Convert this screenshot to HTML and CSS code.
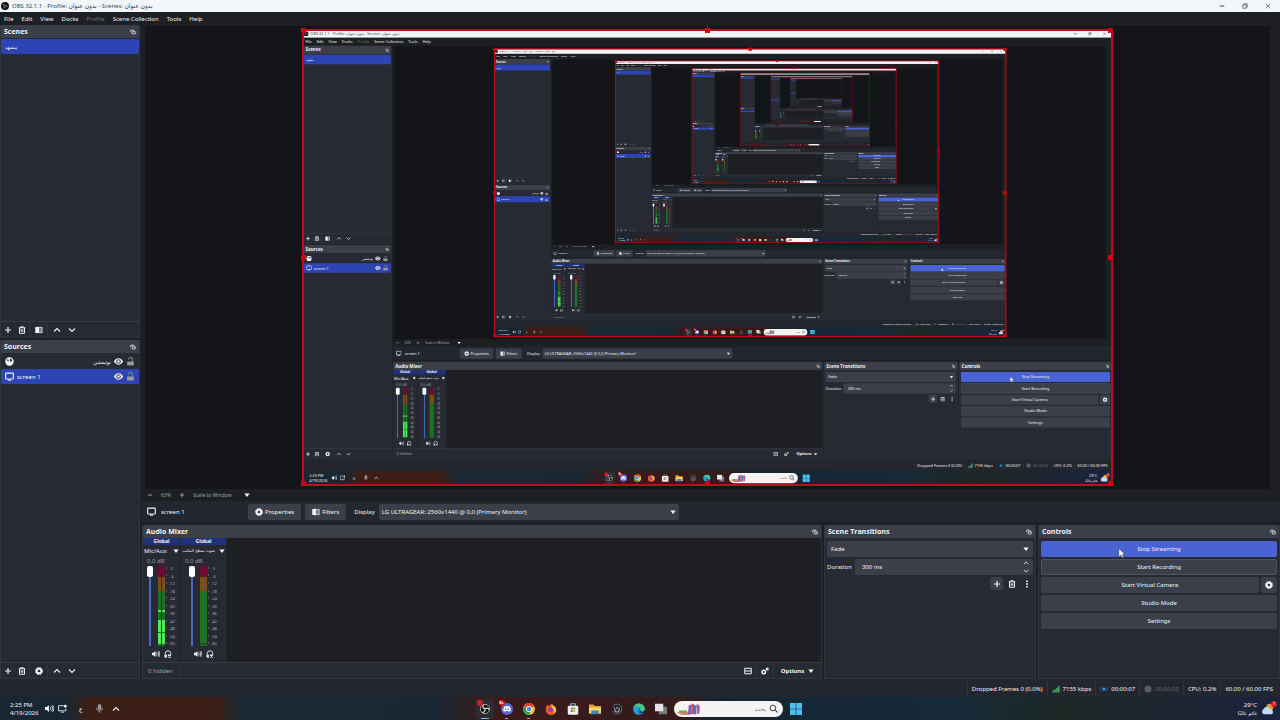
FILE: index.html
```html
<!DOCTYPE html>
<html lang="en">
<head>
    <meta charset="UTF-8">
    <meta name="viewport" content="width=device-width, initial-scale=1.0">
    <title>OBS 32.1.1</title>
    <link rel="stylesheet" href="styles.css">
</head>
<body>
    <svg class="sprite" aria-hidden="true">
        <symbol id="i-obs" viewBox="0 0 16 16"><circle cx="8" cy="8" r="7.5" fill="#111"/><circle cx="8" cy="8" r="6.3" fill="none" stroke="#ddd" stroke-width="1"/><path d="M8 8C5 7 4.500 4.500 6 2.500M8 8c2.500-2 5-1 5.500 1.500M8 8c.5 3-1.500 5-4 4.500" fill="none" stroke="#ddd" stroke-width="1.600"/></symbol>
        <symbol id="i-logo" viewBox="0 0 16 16"><circle cx="8" cy="8" r="8" fill="#111"/><path d="M8 8C5 7 4.500 5 6 3M8 8c2.500-2 4-1 4.500 1.500M8 8c.5 3-1 4-3.500 4" fill="none" stroke="#aaa" stroke-width="1.500"/></symbol>
        <symbol id="i-float" viewBox="0 0 16 16"><path d="M2 9V3h8v2M6 7h8v6H6z" fill="none" stroke="currentColor" stroke-width="2"/></symbol>
        <symbol id="i-plus" viewBox="0 0 16 16"><path d="M8 2v12M2 8h12" stroke="currentColor" stroke-width="2.400"/></symbol>
        <symbol id="i-minus" viewBox="0 0 16 16"><path d="M2 8h12" stroke="currentColor" stroke-width="2.400"/></symbol>
        <symbol id="i-trash" viewBox="0 0 16 16"><path d="M1.500 3.500h13M5.500 3V1.500h5V3M3 4v10.500h10V4M6.500 6.500v5M9.500 6.500v5" fill="none" stroke="currentColor" stroke-width="2"/></symbol>
        <symbol id="i-filter" viewBox="0 0 16 16"><path d="M1 2h14v12H1z" fill="#777b85"/><path d="M1 2h7v12H1z" fill="currentColor"/><path d="M1.700 2.700h12.600v10.600H1.700z" fill="none" stroke="currentColor" stroke-width="1.200"/></symbol>
        <symbol id="i-up" viewBox="0 0 16 16"><path d="M2 11l6-6 6 6" fill="none" stroke="currentColor" stroke-width="2.200"/></symbol>
        <symbol id="i-down" viewBox="0 0 16 16"><path d="M2 5l6 6 6-6" fill="none" stroke="currentColor" stroke-width="2.200"/></symbol>
        <symbol id="i-caret" viewBox="0 0 16 16"><path d="M1 4h14l-7 9z" fill="currentColor"/></symbol>
        <symbol id="i-gear" viewBox="0 0 16 16"><circle cx="8" cy="8" r="4.700" fill="none" stroke="currentColor" stroke-width="4"/><circle cx="8" cy="8" r="6.900" fill="none" stroke="currentColor" stroke-width="2" stroke-dasharray="3.400 2"/></symbol>
        <symbol id="i-globe" viewBox="0 0 16 16"><circle cx="8" cy="8" r="7.500" fill="#fff"/><path d="M3 4l3 .5 1 2-2 1.500zM9 3l4 1.500-1 3-2 2-1-3z" fill="#272a33"/></symbol>
        <symbol id="i-screen" viewBox="0 0 16 16"><rect x="1.200" y="2" width="13.600" height="10.500" rx="1.500" fill="none" stroke="currentColor" stroke-width="2"/><path d="M5 14.500h6" stroke="currentColor" stroke-width="2"/></symbol>
        <symbol id="i-eye" viewBox="0 0 16 16"><path d="M0 8c4-7.500 12-7.500 16 0-4 7.500-12 7.500-16 0z" fill="#fff"/><circle cx="8" cy="8" r="3.300" fill="none" stroke="#2b3350" stroke-width="1.800"/></symbol>
        <symbol id="i-lock" viewBox="0 0 16 16"><path d="M2 8h12v7H2z" fill="#9a9a9e"/><path d="M5 5V4a3 3 0 0 1 6.500 0v4" fill="none" stroke="#85868c" stroke-width="1.800"/></symbol>
        <symbol id="i-speaker" viewBox="0 0 16 16"><path d="M0 5.500h3L7 2v12L3 10.500H0z" fill="currentColor"/><path d="M9 5c1.500 2 1.500 4 0 6M11.500 3.500c2.500 3 2.500 6 0 9M13.500 2c3 4 3 8 0 12" fill="none" stroke="currentColor" stroke-width="1.500"/></symbol>
        <symbol id="i-phones" viewBox="0 0 16 16"><path d="M2.500 14V7a5.500 5.500 0 0 1 11 0v2M2 10h3v4.500H2z" fill="none" stroke="currentColor" stroke-width="1.800"/><path d="M8 9l6 6M14 9l-6 6" stroke="currentColor" stroke-width="2.200"/></symbol>
        <symbol id="i-layout" viewBox="0 0 16 16"><path d="M1.500 2.500h13v11h-13zM2 8h12" fill="none" stroke="currentColor" stroke-width="2"/></symbol>
        <symbol id="i-gears" viewBox="0 0 16 16"><circle cx="5.500" cy="10" r="3.500" fill="none" stroke="currentColor" stroke-width="3"/><circle cx="12.500" cy="4" r="1.800" fill="none" stroke="currentColor" stroke-width="2.400"/></symbol>
        <symbol id="i-dots" viewBox="0 0 16 16"><circle cx="8" cy="2.500" r="1.900" fill="currentColor"/><circle cx="8" cy="8" r="1.900" fill="currentColor"/><circle cx="8" cy="13.500" r="1.900" fill="currentColor"/></symbol>
        <symbol id="i-signal" viewBox="0 0 16 16"><path d="M1 11h3v4H1zM4.700 8.500h3V15h-3zM8.400 5.500h3V15h-3zM12 2h3v13h-3z" fill="#3fae62"/></symbol>
        <symbol id="i-live" viewBox="0 0 16 16"><circle cx="8" cy="8" r="3" fill="#3d9be8"/><path d="M3 3.500c-2 3-2 6 0 9M13 3.500c2 3 2 6 0 9" fill="none" stroke="#2c5f9c" stroke-width="2"/></symbol>
        <symbol id="i-record" viewBox="0 0 16 16"><circle cx="8" cy="8" r="7" fill="#5b5e66"/></symbol>
        <symbol id="i-restore" viewBox="0 0 16 16"><path d="M2 5h9v9H2zM5 5V2h9v9h-3" fill="none" stroke="currentColor" stroke-width="1.600"/></symbol>
        <symbol id="i-close" viewBox="0 0 16 16"><path d="M2 2l12 12M14 2L2 14" stroke="currentColor" stroke-width="1.600"/></symbol>
        <symbol id="i-net" viewBox="0 0 16 16"><path d="M10 3H1v9h13V8M5 14.500h6" fill="none" stroke="currentColor" stroke-width="1.500"/><circle cx="13" cy="4" r="2.500" fill="currentColor"/></symbol>
        <symbol id="i-mic" viewBox="0 0 16 16"><rect x="5.500" y="1" width="5" height="9" rx="2.500" fill="#8a9aa0" stroke="#b8c8cc"/><path d="M2.500 7c0 7 11 7 11 0M8 12.500V15.500" fill="none" stroke="#a8b4b8" stroke-width="1.400"/></symbol>
        <symbol id="i-search" viewBox="0 0 16 16"><circle cx="7" cy="7" r="5" fill="none" stroke="#333" stroke-width="1.700"/><path d="M11 11l4 4" stroke="#333" stroke-width="2"/></symbol>
        <symbol id="i-discord" viewBox="0 0 16 16"><circle cx="8" cy="8" r="8" fill="#5865d8"/><path d="M4.500 4.800c2-1 5-1 7 0 1.300 2 1.700 4 1.500 5.700l-2.600 1.300-.8-1.300H6.400l-.8 1.300L3 10.500c-.2-1.700.2-3.700 1.500-5.700z" fill="#fff"/><circle cx="6.200" cy="8.200" r="1.100" fill="#5865d8"/><circle cx="9.800" cy="8.200" r="1.100" fill="#5865d8"/></symbol>
        <symbol id="i-chrome" viewBox="0 0 16 16"><circle cx="8" cy="8" r="8" fill="#f2c12e"/><path d="M8 8L1.100 4a8 8 0 0 1 13.800 0z" fill="#dc4437"/><path d="M8 8L1.100 4A8 8 0 0 0 8 16l3-6z" fill="#2f9e54"/><circle cx="8" cy="8" r="4" fill="#fff"/><circle cx="8" cy="8" r="3" fill="#4285f4"/></symbol>
        <symbol id="i-firefox" viewBox="0 0 16 16"><path d="M1 6l2-4 2 2 4-3c0 2 6 3 6 8a7 7 0 0 1-14 0z" fill="#f0552c"/><path d="M9 1c0 2 6 3 6 8a7 7 0 0 1-5 6c3-3 2-7-1-8z" fill="#fbbf35"/><circle cx="7.500" cy="9" r="3" fill="#8044c0"/></symbol>
        <symbol id="i-store" viewBox="0 0 16 16"><path d="M5 4V1h6v3" fill="none" stroke="#6bb8e0" stroke-width="1.500"/><rect x="1" y="3.500" width="14" height="12" rx="1.500" fill="#f2f2f2"/><path d="M5 6h2.700v2.700H5z" fill="#e0583c"/><path d="M8.300 6H11v2.700H8.300z" fill="#69a840"/><path d="M5 9.300h2.700V12H5z" fill="#3b8bd0"/><path d="M8.300 9.300H11V12H8.300z" fill="#edb42c"/></symbol>
        <symbol id="i-folder" viewBox="0 0 16 16"><path d="M0 2h6l2 2h8v10H0z" fill="#e2a52e"/><path d="M0 6h16v8H0z" fill="#f8d568"/><path d="M3 10h10v5H3z" fill="#3f83b8"/></symbol>
        <symbol id="i-ring" viewBox="0 0 16 16"><circle cx="8" cy="8" r="7.500" fill="#17181c"/><path d="M2 6a6.500 6.500 0 0 1 6-4.500" stroke="#c060b0" fill="none"/><path d="M8 1.500A6.500 6.500 0 0 1 14.500 8" stroke="#58b070" fill="none"/><path d="M14.500 8A6.500 6.500 0 0 1 2 10.500" stroke="#8890a0" fill="none"/><path d="M5 6v3a3 3 0 0 0 6 0V6M8 4.500v4" stroke="#b8b0c8" stroke-width="1.400" fill="none"/></symbol>
        <symbol id="i-edge" viewBox="0 0 16 16"><circle cx="8" cy="8" r="7.800" fill="#1c78c8"/><path d="M.4 7A7.800 7.800 0 0 1 15.800 8c0 4-6 4-6 1.500C11 6 4 3 .4 7z" fill="#48c878"/><path d="M.5 7C4 3 8 5 8 7c-3 2-2 6 1 8.500C3 16 0 11 .5 7z" fill="#2a9fd8"/><path d="M9.800 9.500c0 2.500 3.500 3 5.700 1.200-1 2-3 3-5 2.300-2-.8-2-3-.7-3.500z" fill="#16283a"/></symbol>
        <symbol id="i-tasks" viewBox="0 0 16 16"><path d="M5 5h11v10H5z" fill="#77797c"/><path d="M0 1h11v10H0z" fill="#e4e4e4"/></symbol>
        <symbol id="i-windows" viewBox="0 0 16 16"><path d="M0 0h7.600v7.600H0zM8.400 0H16v7.600H8.400zM0 8.400h7.600V16H0zM8.400 8.400H16V16H8.400z" fill="#4cc0f0"/></symbol>
        <symbol id="i-books" viewBox="0 0 32 16"><path d="M0 12h14v2H0z" fill="#b89048"/><path d="M2 10h11v2H2z" fill="#7aa05c"/><path d="M4 14h12v1.500H4z" fill="#b05050"/><path d="M15 3l4-1v13h-5z" fill="#8858b0"/><path d="M19 1h3v14h-3z" fill="#c85060"/><path d="M22 3h3v12h-3z" fill="#4878b8"/><path d="M25 2h3l2 3-1 9-3 1z" fill="#a860a0"/></symbol>
        <symbol id="i-weather" viewBox="0 0 16 16"><circle cx="10" cy="6" r="4" fill="#e89a3c"/><path d="M3 14a3.500 3.500 0 0 1 0-6c1.500-3 6-3 7 0 4-.5 5 5 2 6z" fill="#c0dcf8"/></symbol>
        <symbol id="i-cursor" viewBox="0 0 16 16"><path d="M3 1v13l3.200-3 2 4.500 2.300-1-2-4.500h4.200z" fill="#fff" stroke="#333" stroke-width=".7"/></symbol>
        <symbol id="meter-live" viewBox="0 0 9 80">
            <path d="M0 0h3v11H0zM4 0h3v11H4z" fill="#6e0c30"/><path d="M0 11h3v14H0zM4 11h3v14H4z" fill="#79501a"/><path d="M0 25h3v55H0zM4 25h3v55H4z" fill="#1f6f25"/>
            <path d="M0 44h3v2H0zM4 44h3v2H4zM0 54h3v12H0zM4 54h3v12H4zM0 67h3v11H0zM4 67h3v11H4z" fill="#50ea5a"/>
            <path d="M8 2h1M8 9h1M8 17h1M8 25h1M8 32h1M8 40h1M8 47h1M8 55h1M8 62h1M8 70h1M8 77h1" stroke="#888"/>
        </symbol>
        <symbol id="meter-idle" viewBox="0 0 9 80">
            <path d="M0 0h7v11H0z" fill="#6e0c30"/><path d="M0 11h7v14H0z" fill="#79501a"/><path d="M0 25h7v55H0z" fill="#1f6f25"/><path d="M0 78h7" stroke="#123f18"/>
            <path d="M8 2h1M8 9h1M8 17h1M8 25h1M8 32h1M8 40h1M8 47h1M8 55h1M8 62h1M8 70h1M8 77h1" stroke="#888"/>
        </symbol>
    </svg>

    <div class="desktop">
        <header class="titlebar">
            <svg class="icon"><use href="#i-logo"/></svg>
            <span class="titlebar-text">OBS 32.1.1 - Profile: بدون عنوان - Scenes: <bdi>بدون عنوان</bdi></span>
            <div class="window-buttons">
                <button aria-label="Minimize"><svg class="icon-xs"><use href="#i-minus"/></svg></button>
                <button aria-label="Restore"><svg class="icon-xs"><use href="#i-restore"/></svg></button>
                <button aria-label="Close"><svg class="icon-xs"><use href="#i-close"/></svg></button>
            </div>
        </header>
        <nav class="menubar">
            <button>File</button>
            <button>Edit</button>
            <button>View</button>
            <button>Docks</button>
            <button disabled>Profile</button>
            <button>Scene Collection</button>
            <button>Tools</button>
            <button>Help</button>
        </nav>

        <main class="workspace">
            <aside class="sidebar">
                <section class="dock">
                    <h2 class="dock-title">Scenes <svg class="icon-xs"><use href="#i-float"/></svg></h2>
                    <ul class="list">
                        <li class="row selected"><span class="arabic">مشهد</span></li>
                    </ul>
                    <div class="toolbar">
                        <button aria-label="Add scene"><svg class="icon"><use href="#i-plus"/></svg></button>
                        <button aria-label="Remove scene"><svg class="icon"><use href="#i-trash"/></svg></button>
                        <button class="split" aria-label="Scene filters"><svg class="icon"><use href="#i-filter"/></svg></button>
                        <button class="split" aria-label="Move scene up"><svg class="icon"><use href="#i-up"/></svg></button>
                        <button aria-label="Move scene down"><svg class="icon"><use href="#i-down"/></svg></button>
                    </div>
                </section>
                <section class="dock">
                    <h2 class="dock-title">Sources <svg class="icon-xs"><use href="#i-float"/></svg></h2>
                    <ul class="list">
                        <li class="row">
                            <svg class="icon-lg"><use href="#i-globe"/></svg>
                            <span class="row-name arabic" dir="rtl">نوتيفشن</span>
                            <svg class="icon-lg"><use href="#i-eye"/></svg>
                            <svg class="icon-lg"><use href="#i-lock"/></svg>
                        </li>
                        <li class="row selected">
                            <svg class="icon-lg"><use href="#i-screen"/></svg>
                            <span class="row-name">screen 1</span>
                            <svg class="icon-lg"><use href="#i-eye"/></svg>
                            <svg class="icon-lg"><use href="#i-lock"/></svg>
                        </li>
                    </ul>
                    <div class="toolbar">
                        <button aria-label="Add source"><svg class="icon"><use href="#i-plus"/></svg></button>
                        <button aria-label="Remove source"><svg class="icon"><use href="#i-trash"/></svg></button>
                        <button class="split" aria-label="Source properties"><svg class="icon"><use href="#i-gear"/></svg></button>
                        <button class="split" aria-label="Move source up"><svg class="icon"><use href="#i-up"/></svg></button>
                        <button aria-label="Move source down"><svg class="icon"><use href="#i-down"/></svg></button>
                    </div>
                </section>
            </aside>

            <div class="content">
                <div class="preview">
                    <div class="capture">
                        <div class="capture-view" aria-hidden="true" inert></div>
                        <div class="handles"><i></i><i></i><i></i><i></i><i></i><i></i><i></i><i></i></div>
                    </div>
                </div>

                <div class="zoombar">
                    <button aria-label="Zoom out"><svg class="icon-xs"><use href="#i-minus"/></svg></button>
                    <span class="zoom-value">63%</span>
                    <button aria-label="Zoom in"><svg class="icon-xs"><use href="#i-plus"/></svg></button>
                    <span class="combo">
                        <select aria-label="Preview scaling"><option>Scale to Window</option></select>
                        <svg class="icon-xs"><use href="#i-caret"/></svg>
                    </span>
                </div>

                <div class="context">
                    <svg class="icon-lg"><use href="#i-screen"/></svg>
                    <span class="context-name">screen 1</span>
                    <button class="button"><svg class="icon"><use href="#i-gear"/></svg>Properties</button>
                    <button class="button"><svg class="icon"><use href="#i-filter"/></svg>Filters</button>
                    <label class="display-label">Display
                        <span class="combo">
                            <select><option>LG ULTRAGEAR: 2560x1440 @ 0,0 (Primary Monitor)</option></select>
                            <svg class="icon-xs"><use href="#i-caret"/></svg>
                        </span>
                    </label>
                </div>

                <div class="docks">
                    <section class="dock">
                        <h2 class="dock-title">Audio Mixer <svg class="icon-xs"><use href="#i-float"/></svg></h2>
                        <div class="mixer">
                            <div class="strip">
                                <div class="strip-tag">Global</div>
                                <button class="strip-name">Mic/Aux <svg class="icon-xs"><use href="#i-caret"/></svg></button>
                                <div class="strip-db">0.0 dB</div>
                                <div class="strip-levels">
                                    <input type="range" min="-60" max="0" value="0" aria-label="Mic/Aux volume">
                                    <svg class="meter"><use href="#meter-live"/></svg>
                                    <div class="scale"><span>0</span><span>-6</span><span>-12</span><span>-18</span><span>-24</span><span>-30</span><span>-36</span><span>-42</span><span>-48</span><span>-54</span><span>-60</span></div>
                                </div>
                                <div class="strip-buttons">
                                    <button aria-label="Mute"><svg class="icon"><use href="#i-speaker"/></svg></button>
                                    <button aria-label="Monitor"><svg class="icon"><use href="#i-phones"/></svg></button>
                                </div>
                            </div>
                            <div class="strip wide">
                                <div class="strip-tag">Global</div>
                                <button class="strip-name"><span class="arabic" dir="rtl">صوت سطح المكتب</span> <svg class="icon-xs"><use href="#i-caret"/></svg></button>
                                <div class="strip-db">0.0 dB</div>
                                <div class="strip-levels">
                                    <input type="range" min="-60" max="0" value="0" aria-label="Desktop volume">
                                    <svg class="meter"><use href="#meter-idle"/></svg>
                                    <div class="scale"><span>0</span><span>-6</span><span>-12</span><span>-18</span><span>-24</span><span>-30</span><span>-36</span><span>-42</span><span>-48</span><span>-54</span><span>-60</span></div>
                                </div>
                                <div class="strip-buttons">
                                    <button aria-label="Mute"><svg class="icon"><use href="#i-speaker"/></svg></button>
                                    <button aria-label="Monitor"><svg class="icon"><use href="#i-phones"/></svg></button>
                                </div>
                            </div>
                        </div>
                        <div class="toolbar mixer-footer">
                            <span class="hidden-count">0 hidden</span>
                            <button aria-label="Toggle layout"><svg class="icon"><use href="#i-layout"/></svg></button>
                            <button class="split" aria-label="Advanced audio"><svg class="icon"><use href="#i-gears"/></svg></button>
                            <button class="options split">Options <svg class="icon-xs"><use href="#i-caret"/></svg></button>
                        </div>
                    </section>

                    <section class="dock">
                        <h2 class="dock-title">Scene Transitions <svg class="icon-xs"><use href="#i-float"/></svg></h2>
                        <div class="panel">
                            <span class="combo">
                                <select aria-label="Transition"><option>Fade</option></select>
                                <svg class="icon-xs"><use href="#i-caret"/></svg>
                            </span>
                            <label class="duration">Duration
                                <span class="spin">
                                    <input type="text" value="300 ms">
                                    <span class="spin-arrows"><svg class="icon-xs"><use href="#i-up"/></svg><svg class="icon-xs"><use href="#i-down"/></svg></span>
                                </span>
                            </label>
                            <div class="transition-buttons">
                                <button class="filled" aria-label="Add transition"><svg class="icon"><use href="#i-plus"/></svg></button>
                                <button aria-label="Remove transition"><svg class="icon"><use href="#i-trash"/></svg></button>
                                <button aria-label="More"><svg class="icon"><use href="#i-dots"/></svg></button>
                            </div>
                        </div>
                    </section>

                    <section class="dock">
                        <h2 class="dock-title">Controls <svg class="icon-xs"><use href="#i-float"/></svg></h2>
                        <div class="panel controls">
                            <button class="button active">Stop Streaming<svg class="cursor"><use href="#i-cursor"/></svg></button>
                            <button class="button outlined">Start Recording</button>
                            <div class="button-pair">
                                <button class="button">Start Virtual Camera</button>
                                <button class="button" aria-label="Virtual camera settings"><svg class="icon"><use href="#i-gear"/></svg></button>
                            </div>
                            <button class="button">Studio Mode</button>
                            <button class="button">Settings</button>
                        </div>
                    </section>
                </div>
            </div>
        </main>

        <footer class="statusbar">
            <span>Dropped Frames 0 (0.0%)</span>
            <span><svg class="icon"><use href="#i-signal"/></svg>7155 kbps</span>
            <span><svg class="icon"><use href="#i-live"/></svg>00:00:07</span>
            <span class="dim"><svg class="icon"><use href="#i-record"/></svg>00:00:00</span>
            <span>CPU: 0.2%</span>
            <span>60.00 / 60.00 FPS</span>
        </footer>

        <div class="taskbar">
            <div class="tray">
                <div class="clock"><span>2:25 PM</span><span>4/19/2026</span></div>
                <svg class="icon-lg"><use href="#i-speaker"/></svg>
                <svg class="icon-lg"><use href="#i-net"/></svg>
                <span class="lang">ع</span>
                <svg class="icon-lg"><use href="#i-mic"/></svg>
                <svg class="icon"><use href="#i-up"/></svg>
            </div>
            <div class="apps">
                <button class="app current" aria-label="OBS"><svg><use href="#i-obs"/></svg><b class="badge"></b></button>
                <button class="app running" aria-label="Discord"><svg><use href="#i-discord"/></svg><b class="badge">9+</b></button>
                <button class="app running" aria-label="Chrome"><svg><use href="#i-chrome"/></svg></button>
                <button class="app" aria-label="Firefox"><svg><use href="#i-firefox"/></svg></button>
                <button class="app" aria-label="Store"><svg><use href="#i-store"/></svg></button>
                <button class="app" aria-label="Explorer"><svg><use href="#i-folder"/></svg></button>
                <button class="app" aria-label="Recorder"><svg><use href="#i-ring"/></svg></button>
                <button class="app" aria-label="Edge"><svg><use href="#i-edge"/></svg></button>
                <button class="app" aria-label="Task view"><svg><use href="#i-tasks"/></svg></button>
                <label class="search">
                    <svg class="books"><use href="#i-books"/></svg>
                    <input type="text" dir="rtl" placeholder="بحث" aria-label="Search">
                    <svg class="icon-lg"><use href="#i-search"/></svg>
                </label>
                <button class="app" aria-label="Start"><svg><use href="#i-windows"/></svg></button>
            </div>
            <div class="weather">
                <div class="weather-text"><span>29°C</span><span class="arabic" dir="rtl">غائم غالبًا</span></div>
                <span class="weather-icon"><svg><use href="#i-weather"/></svg><b class="badge">!</b></span>
            </div>
        </div>
    </div>

    <script src="preview.js"></script>
</body>
</html>
```

FILE: styles.css
```css
* {
    box-sizing: border-box;
}

body {
    margin: 0;
    overflow: hidden;
    background: #1d1f26;
    color: #f2f3f5;
    font-family: "Noto Sans", "DejaVu Sans", sans-serif;
    font-size: 6px;
    line-height: 10px;
}

button,
select,
input {
    margin: 0;
    padding: 0;
    border: 0;
    background: none;
    color: inherit;
    font: inherit;
}

button {
    display: flex;
    align-items: center;
    justify-content: center;
    white-space: nowrap;
}

select {
    appearance: none;
}

svg {
    display: block;
    flex: none;
}

.sprite {
    position: absolute;
    width: 0;
    height: 0;
}

.icon-xs {
    width: 6px;
    height: 6px;
}

.icon {
    width: 8px;
    height: 8px;
}

.icon-lg {
    width: 9px;
    height: 9px;
}

.arabic {
    font-family: "DejaVu Sans", sans-serif;
    font-size: 5px;
}

.desktop {
    display: flex;
    flex-direction: column;
    width: 100vw;
    height: 100vh;
    background: #1d1f23;
}

/* Title bar and menu */
.titlebar {
    display: flex;
    align-items: center;
    gap: 3px;
    height: 12px;
    padding: 0 9px 0 1px;
    background: #f2f6fb;
    color: #333;
}

.titlebar-text {
    flex: 1;
    font-family: "Open Sans", "DejaVu Sans", sans-serif;
}

.window-buttons {
    display: flex;
    gap: 17px;
}

.menubar {
    display: flex;
    gap: 8px;
    height: 13px;
    padding: 0 4px;
}

.menubar button:disabled {
    color: #6a6c72;
}

/* Docks */
.workspace {
    display: flex;
    flex: 1;
    gap: 2px;
    min-height: 0;
}

.sidebar {
    display: grid;
    grid-template-rows: 313fr 339fr;
    gap: 2px;
    width: 140px;
}

.content {
    display: flex;
    flex: 1;
    flex-direction: column;
    min-width: 0;
}

.dock {
    display: flex;
    flex-direction: column;
    min-width: 0;
    border: 1px solid #32353f;
    border-top: 0;
    background: #272a33;
}

.dock-title {
    display: flex;
    align-items: center;
    justify-content: space-between;
    height: 13px;
    margin: 0;
    padding: 0 3px;
    border-radius: 2px 2px 0 0;
    background: #3c3e4a;
    font-family: "Open Sans", sans-serif;
    font-size: 7px;
    font-weight: 700;
}

.list {
    flex: 1;
    margin: 0;
    padding: 1px 0;
    list-style: none;
}

.row {
    display: flex;
    align-items: center;
    gap: 3px;
    height: 15px;
    padding: 0 4px;
    border-radius: 2px;
}

.row.selected {
    background: #2d45b4;
}

.row-name {
    flex: 1;
}

.toolbar {
    display: flex;
    align-items: center;
    height: 16px;
    border-top: 1px solid #383b45;
}

.toolbar button {
    width: 14px;
    height: 15px;
}

.toolbar .split {
    width: 18px;
    border-left: 1px solid #32353f;
}

/* Preview */
.preview {
    display: flex;
    flex: 1;
    justify-content: center;
    min-height: 0;
    margin: 1px 10px 0 3px;
    padding: 4px;
    background: #141519;
}

.capture {
    position: relative;
    height: 100%;
    min-width: 0;
    aspect-ratio: 16 / 9;
}

/* the copies inside are full size until scaled, so they must not stretch the frame */
.capture-view {
    contain: strict;
    height: 100%;
}

.capture-view > .desktop {
    transform: scale(var(--capture-scale, 1));
    transform-origin: 0 0;
}

.handles {
    position: absolute;
    inset: -1px;
    border: 2px solid #c20a18;
}

.handles i {
    position: absolute;
    width: 5px;
    height: 5px;
    margin: -3px;
    background: #d40012;
}

.handles i:nth-child(1) { top: 0; left: 0; }
.handles i:nth-child(2) { top: 0; left: 50%; }
.handles i:nth-child(3) { top: 0; left: 100%; }
.handles i:nth-child(4) { top: 50%; left: 0; }
.handles i:nth-child(5) { top: 50%; left: 100%; }
.handles i:nth-child(6) { top: 100%; left: 0; }
.handles i:nth-child(7) { top: 100%; left: 50%; }
.handles i:nth-child(8) { top: 100%; left: 100%; }

.handles i:nth-child(2)::before {
    content: "";
    position: absolute;
    left: 2px;
    bottom: 5px;
    width: 1px;
    height: 3px;
    background: #d40012;
}

.combo {
    display: grid;
    align-items: center;
}

.combo > * {
    grid-area: 1 / 1;
}

.combo svg {
    justify-self: end;
    pointer-events: none;
}

.zoombar {
    display: flex;
    align-items: center;
    gap: 8px;
    height: 11px;
    padding-left: 5px;
    color: #a0a2a8;
    font-size: 5px;
}

.zoombar .combo {
    width: 57px;
}

.zoombar .combo svg {
    color: #fff;
}

.context {
    display: flex;
    align-items: center;
    height: 21px;
    margin: 1px 0 3px;
    padding-left: 5px;
    background: #23262e;
}

.context-name {
    width: 92px;
    padding-left: 5px;
}

.context .button {
    margin-right: 4px;
    padding: 0 7px;
}

.display-label {
    display: flex;
    align-items: center;
    gap: 4px;
    padding-left: 4px;
}

.display-label .combo {
    width: 300px;
    height: 16px;
    padding: 0 3px;
    border-radius: 2px;
    background: #3c3f4a;
}

.button {
    gap: 2px;
    height: 16px;
    border-radius: 2px;
    background: #3c3f4a;
}

.docks {
    display: grid;
    grid-template-columns: 1fr 212px 242px;
    gap: 2px;
    height: 154px;
}

/* Audio mixer */
.mixer {
    display: flex;
    flex: 1;
    background: #1d1f23;
}

.strip {
    width: 38px;
    border-right: 1px solid #20232b;
    background: #272a33;
}

.strip.wide {
    width: 46px;
}

.strip-tag {
    height: 7px;
    background: #20307c;
    font-size: 5px;
    font-weight: 700;
    line-height: 7px;
    text-align: center;
}

.strip-name {
    justify-content: space-between;
    width: 100%;
    height: 11px;
    padding: 0 1px;
}

.strip-name .arabic {
    font-size: 4px;
}

.strip-db {
    height: 10px;
    padding-left: 4px;
    color: #96989f;
}

.strip-levels {
    display: flex;
    gap: 5px;
    height: 80px;
    padding-left: 4px;
}

.wide .strip-levels {
    padding-left: 8px;
}

.strip-levels input {
    appearance: none;
    width: 6px;
    height: 80px;
    background: linear-gradient(90deg, transparent 2px, #4568c0 2px, #4568c0 4px, transparent 4px);
    writing-mode: vertical-lr;
    direction: rtl;
}

.strip-levels input::-webkit-slider-thumb {
    appearance: none;
    width: 6px;
    height: 11px;
    border-radius: 2px;
    background: #fff;
}

.meter {
    width: 9px;
    height: 80px;
    margin-right: -3px;
}

.scale {
    display: flex;
    flex-direction: column;
    justify-content: space-between;
    height: 80px;
    color: #aaacb2;
    font-size: 4px;
    line-height: 5px;
    text-align: center;
}

.strip-buttons {
    display: flex;
    justify-content: center;
    gap: 4px;
    padding-top: 4px;
}

.mixer-footer .hidden-count {
    margin-right: auto;
    padding: 0 6px 0 5px;
    border-right: 1px solid #32353f;
    color: #a0a2a8;
}

.toolbar .options {
    gap: 4px;
    width: 48px;
    font-weight: 700;
}

/* Transitions and controls */
.panel {
    display: flex;
    flex-direction: column;
    gap: 2px;
    padding: 3px 2px;
}

.panel .combo,
.spin {
    height: 16px;
    padding: 0 4px;
    border-radius: 2px;
    background: #3c3f4a;
}

.duration {
    display: flex;
    align-items: center;
    gap: 3px;
}

.spin {
    display: flex;
    flex: 1;
    align-items: center;
    justify-content: space-between;
    min-width: 0;
}

.spin input {
    flex: 1;
    min-width: 0;
    padding-left: 3px;
}

.spin-arrows {
    display: grid;
    gap: 2px;
}

.transition-buttons {
    display: flex;
    justify-content: flex-end;
    gap: 2px;
}

.transition-buttons button {
    width: 13px;
    height: 13px;
}

.transition-buttons .filled {
    border-radius: 2px;
    background: #3c3f4a;
}

.controls .active {
    position: relative;
    background: #4a63d2;
}

.controls .outlined {
    border: 1px solid #50535f;
}

.cursor {
    position: absolute;
    top: 7px;
    left: 32%;
    width: 10px;
    height: 10px;
}

.button-pair {
    display: grid;
    grid-template-columns: 1fr 16px;
    gap: 2px;
}

.statusbar {
    display: flex;
    justify-content: flex-end;
    height: 18px;
    padding: 2px 3px 1px;
    background: #23262e;
}

.statusbar span {
    display: flex;
    align-items: center;
    gap: 3px;
    padding: 0 4px;
    border-left: 1px solid #32353f;
}

.statusbar .dim {
    color: #6a6c72;
}

/* Windows taskbar */
.taskbar {
    display: grid;
    grid-template-columns: 1fr auto 1fr;
    align-items: center;
    height: 23px;
    background: linear-gradient(90deg, #172733 0, #172733 5%, #3b1f17 7%, #3b1f17 17%, #182935 19%, #182733 34%, #3a1a1a 38%, #341b1c 53%, #152633 56%, #162936 75%, #1c2825 83%, #1b2535 94%, #1a2340 100%);
}

.tray {
    display: flex;
    align-items: center;
    gap: 4px;
    padding-left: 10px;
}

.clock,
.weather-text {
    display: grid;
    line-height: 8px;
}

.clock {
    width: 31px;
}

.lang {
    padding: 0 8px;
}

.tray > .icon {
    margin-left: 4px;
}

.apps {
    display: flex;
    align-items: center;
    gap: 4px;
}

.app {
    position: relative;
    width: 18px;
    height: 20px;
}

.app svg {
    width: 12px;
    height: 12px;
}

.app.current {
    border-radius: 2px;
    background: #2c2d33;
}

.app.running::after,
.app.current::after {
    content: "";
    position: absolute;
    bottom: 0;
    width: 3px;
    height: 1px;
    background: #a8a8a8;
}

.app.current::after {
    width: 8px;
    background: #60c0f0;
}

.badge {
    position: absolute;
    top: 1px;
    left: 1px;
    min-width: 6px;
    height: 6px;
    border-radius: 3px;
    background: #d81c24;
    color: #fff;
    font-size: 4px;
    line-height: 6px;
    text-align: center;
}

.search {
    display: flex;
    align-items: center;
    justify-content: space-between;
    width: 109px;
    height: 16px;
    padding: 0 5px 0 3px;
    border-radius: 8px;
    background: #f4f4f2;
}

.search input {
    width: 62px;
    color: #555;
}

.search input::placeholder {
    color: #777;
}

.books {
    width: 25px;
    height: 12px;
}

.weather {
    display: flex;
    align-items: center;
    justify-content: flex-end;
    gap: 4px;
    padding-right: 5px;
    text-align: right;
}

.weather-text .arabic {
    text-align: right;
}

.weather-icon {
    position: relative;
}

.weather-icon svg {
    width: 14px;
    height: 14px;
}

.weather-icon .badge {
    top: -1px;
    left: 10px;
}
```

FILE: preview.js
```js
// The captured display contains the OBS window itself, so every level shows the whole desktop again
const CAPTURE_DEPTH = 7;

const desktop = document.querySelector('.desktop');
const template = desktop.cloneNode(true);
let view = desktop.querySelector('.capture-view');

function updateScale() {
    const scale = document.querySelector('.capture').clientWidth / window.innerWidth;
    document.documentElement.style.setProperty('--capture-scale', scale);
}

for (let i = 0; i < CAPTURE_DEPTH; i++) {
    const copy = template.cloneNode(true);
    view.appendChild(copy);
    view = copy.querySelector('.capture-view');
}

updateScale();
window.addEventListener('resize', updateScale);
```
